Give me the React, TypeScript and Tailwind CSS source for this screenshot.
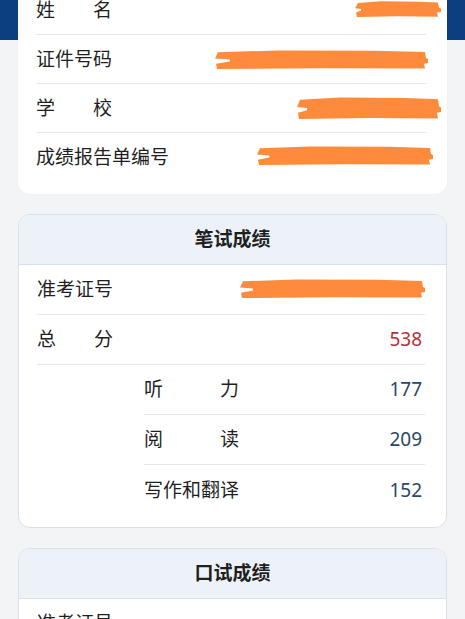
import type { ReactNode } from "react";

const FONT = "font-['Noto_Sans','Noto_Sans_CJK_SC',sans-serif]";

// orange redaction scribble, mostly a solid bar with ragged ends
const Scribble = ({ w, h, className = "" }: { w: number; h: number; className?: string }) => (
  <svg width={w} height={h} viewBox={`0 0 ${w} ${h}`} className={`shrink-0 ${className}`}>
    <path
      d={`M3 ${h * 0.12} L${w * 0.3} ${h * 0.02} L${w * 0.75} ${h * 0.04} L${w - 3} ${h * 0.1} L${w - 2} ${h * 0.42} L${w} ${h * 0.48} L${w} ${h * 0.68} L${w - 4} ${h * 0.72} L${w - 3} ${h * 0.98} L${w * 0.5} ${h * 0.96} L2 ${h} L1 ${h * 0.72} L${w * 0.07} ${h * 0.6} L${w * 0.07} ${h * 0.5} L0 ${h * 0.45} Z`}
      fill="#fd8b3b"
    />
  </svg>
);

const Justify = ({ text, w }: { text: string; w: string }) => (
  <span className={`flex justify-between ${w}`}>
    {text.split("").map((c, i) => (
      <span key={i}>{c}</span>
    ))}
  </span>
);

const Row = ({
  label,
  children,
  last,
  indent,
  tall,
}: {
  label: ReactNode;
  children?: ReactNode;
  last?: boolean;
  indent?: boolean;
  tall?: boolean;
}) => (
  <div
    className={`flex shrink-0 items-center justify-between ${tall ? "h-[50px]" : "h-[49px]"} ${
      last ? "" : "border-b border-[#e6e8ec]"
    } ${indent ? "ml-[107px]" : ""}`}
  >
    <div className="text-[19px] text-[#1f1f1f]">{label}</div>
    {children}
  </div>
);

const Score = ({ v, red }: { v: string; red?: boolean }) => (
  <span className={`mr-[3px] text-[19px] ${red ? "text-[#b2323b]" : "text-[#2a4767]"}`}>{v}</span>
);

const ScoreCard = ({ title, children }: { title: string; children: ReactNode }) => (
  <div className="shrink-0 overflow-hidden rounded-[12px] border border-[#d8e1ea] bg-white">
    <div className="flex h-[50px] items-center justify-center border-b border-[#d8e1ea] bg-[#edf2f8] text-[19px] font-bold text-[#1f1f1f]">
      {title}
    </div>
    <div className="pl-[18px] pr-[21px] pb-[12px]">{children}</div>
  </div>
);

export default function App() {
  return (
    <div
      className={`${FONT} flex h-[619px] flex-col gap-[20px] overflow-hidden bg-[linear-gradient(#0b3f80_0_40px,#f3f4f6_40px)] px-[18px]`}
    >
      <div className="-mt-[24px] shrink-0 rounded-[12px] bg-white pl-[18px] pr-[21px] pt-[10px] pb-[12px] shadow-[0_0_2px_rgba(0,0,0,0.05)]">
        <Row label={<Justify text="姓名" w="w-[76px]" />}>
          <Scribble w={86} h={16} className="-mr-[15px] -translate-y-[1px]" />
        </Row>
        <Row label="证件号码">
          <Scribble w={213} h={19} className="-mr-[2px]" />
        </Row>
        <Row label={<Justify text="学校" w="w-[76px]" />}>
          <Scribble w={144} h={22} className="-mr-[15px]" />
        </Row>
        <Row label="成绩报告单编号" last>
          <Scribble w={176} h={19} className="-mr-[7px] -translate-y-[2px]" />
        </Row>
      </div>

      <ScoreCard title="笔试成绩">
        <Row tall label="准考证号">
          <Scribble w={185} h={19} className="-translate-y-[1px]" />
        </Row>
        <Row tall label={<Justify text="总分" w="w-[76px]" />}>
          <Score v="538" red />
        </Row>
        <Row tall indent label={<Justify text="听力" w="w-[95px]" />}>
          <Score v="177" />
        </Row>
        <Row tall indent label={<Justify text="阅读" w="w-[95px]" />}>
          <Score v="209" />
        </Row>
        <Row tall indent last label="写作和翻译">
          <Score v="152" />
        </Row>
      </ScoreCard>

      <ScoreCard title="口试成绩">
        <Row tall label="准考证号" />
      </ScoreCard>
    </div>
  );
}
